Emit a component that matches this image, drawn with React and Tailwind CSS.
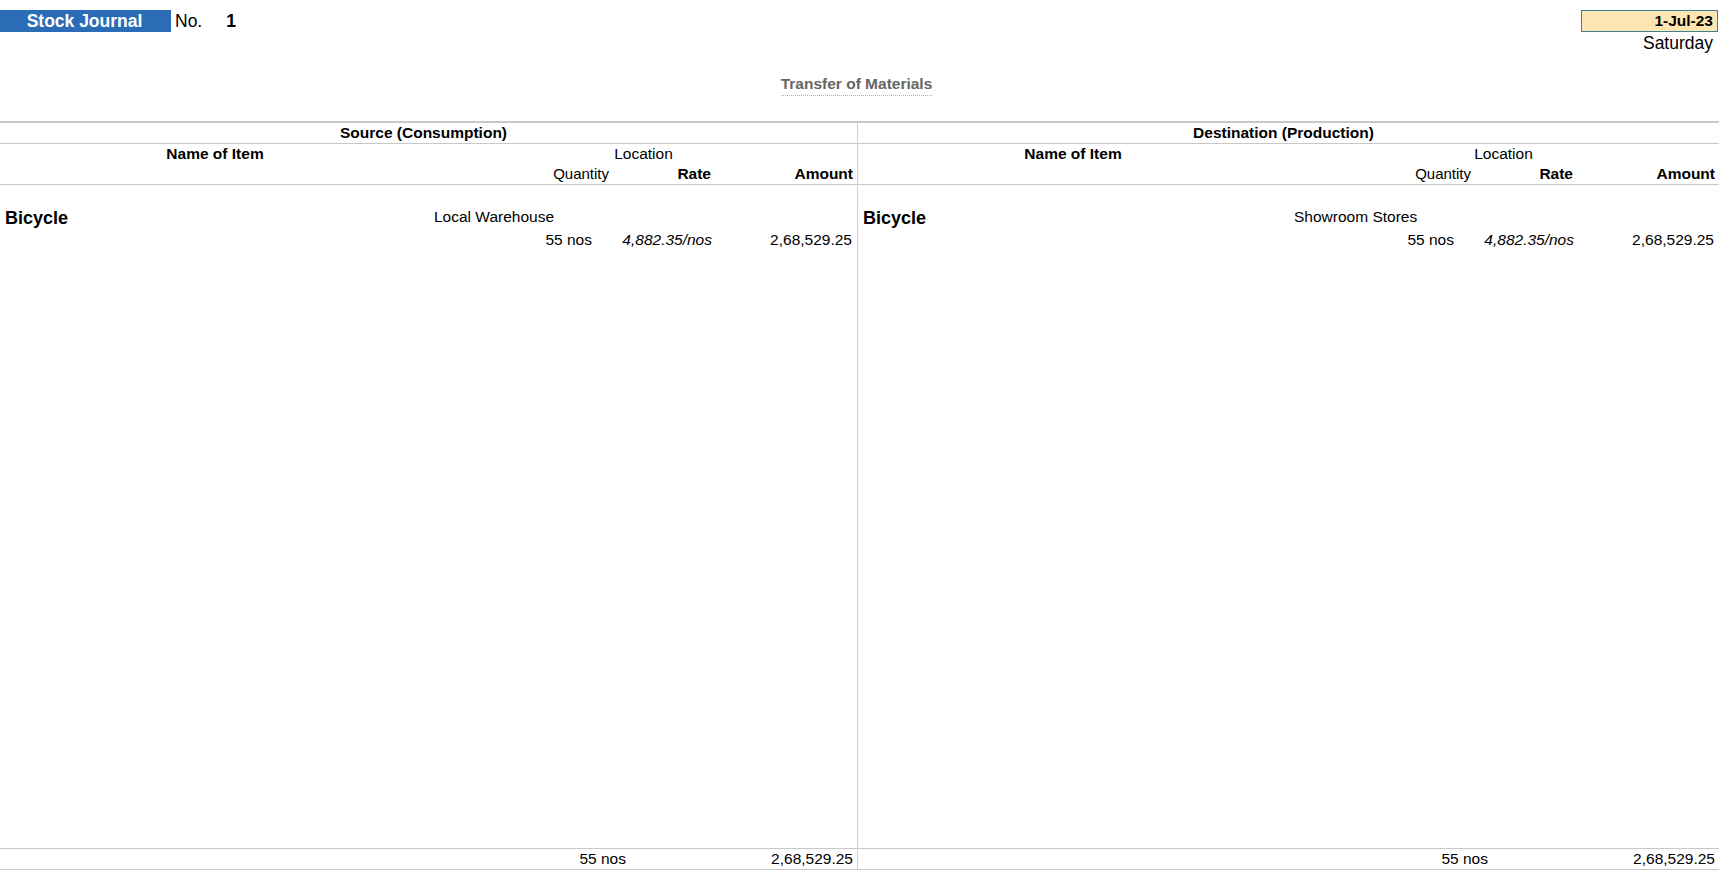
import React from "react";

function Panel({ title, location, right }) {
  return (
    <div className={`flex flex-col h-full ${right ? "flex-1" : "w-[858px] border-r border-[#cfcfcf]"}`}>
      <div className="h-[21px] border-b border-[#c8c8c8] flex items-center justify-center pr-[10px] font-bold text-[15.5px] leading-[20px]">
        {title}
      </div>
      <div className="h-[41px] border-b border-[#c8c8c8] flex flex-col">
        <div className="flex h-[19px] items-center text-[15.5px] leading-[19px]">
          <div className="w-[430px] text-center font-bold">Name of Item</div>
          <div className="flex-1 text-center">Location</div>
        </div>
        <div className="flex h-[21px] items-center justify-end pr-[4px] text-[15.5px] leading-[20px]">
          <div className="w-[100px] text-right text-[15px]">Quantity</div>
          <div className="w-[102px] text-right font-bold">Rate</div>
          <div className="w-[142px] text-right font-bold">Amount</div>
        </div>
      </div>
      <div className="flex-1 pt-[23px]">
        <div className="flex h-[21px] items-start">
          <div className="w-[430px] pl-[5px] font-bold text-[18px] leading-[21px]">Bicycle</div>
          <div className={`flex-1 text-[15.5px] leading-[18px] ${right ? "pl-[6px]" : "pl-[4px]"}`}>{location}</div>
        </div>
        <div className="mt-[1px] flex h-[20px] items-center justify-end pr-[5px] text-[15.5px] leading-[20px]">
          <div className="w-[100px] text-right">55 nos</div>
          <div className="w-[120px] text-right italic">4,882.35/nos</div>
          <div className="w-[140px] text-right">2,68,529.25</div>
        </div>
      </div>
      <div className="h-[21px] border-t border-[#c8c8c8] flex items-center justify-end pr-[4px] text-[15.5px] leading-[20px]">
        <div className="w-[100px] text-right">55 nos</div>
        <div className="w-[227px] text-right">2,68,529.25</div>
      </div>
    </div>
  );
}

export default function App() {
  return (
    <div className="w-[1719px] h-[871px] bg-white text-black font-['Liberation_Sans',Arial,sans-serif] flex flex-col overflow-hidden">
      <div className="h-[121px] flex flex-col shrink-0">
        <div className="flex justify-between items-start pt-[10px]">
          <div className="flex items-center h-[22px]">
            <div className="w-[171px] h-[22px] bg-[#2b6cb6] text-white font-bold text-[17.5px] leading-[22px] text-center pr-[2px]">
              Stock Journal
            </div>
            <div className="ml-[4px] text-[17.5px] leading-[22px]">No.</div>
            <div className="ml-[24px] text-[17.5px] leading-[22px] font-bold">1</div>
          </div>
          <div className="flex flex-col items-end pr-[1px]">
            <div className="w-[137px] h-[22px] bg-[#fee5b2] border border-[#3d8288] text-right pr-[4px] font-bold text-[15.5px] leading-[20px]">
              1-Jul-23
            </div>
            <div className="pr-[5px] text-[17.5px] leading-[22px]">Saturday</div>
          </div>
        </div>
        <div className="mt-[18px] text-center pr-[6px]">
          <span className="inline-block text-[#666666] font-bold text-[15.5px] leading-[18px] pb-[2px] border-b border-dotted border-[#b0b0b0]">
            Transfer of Materials
          </span>
        </div>
      </div>
      <div className="flex-1 border-t-2 border-b border-[#c8c8c8] mb-[1px] flex">
        <Panel title="Source (Consumption)" location="Local Warehouse" />
        <Panel title="Destination (Production)" location="Showroom Stores" right />
      </div>
    </div>
  );
}
